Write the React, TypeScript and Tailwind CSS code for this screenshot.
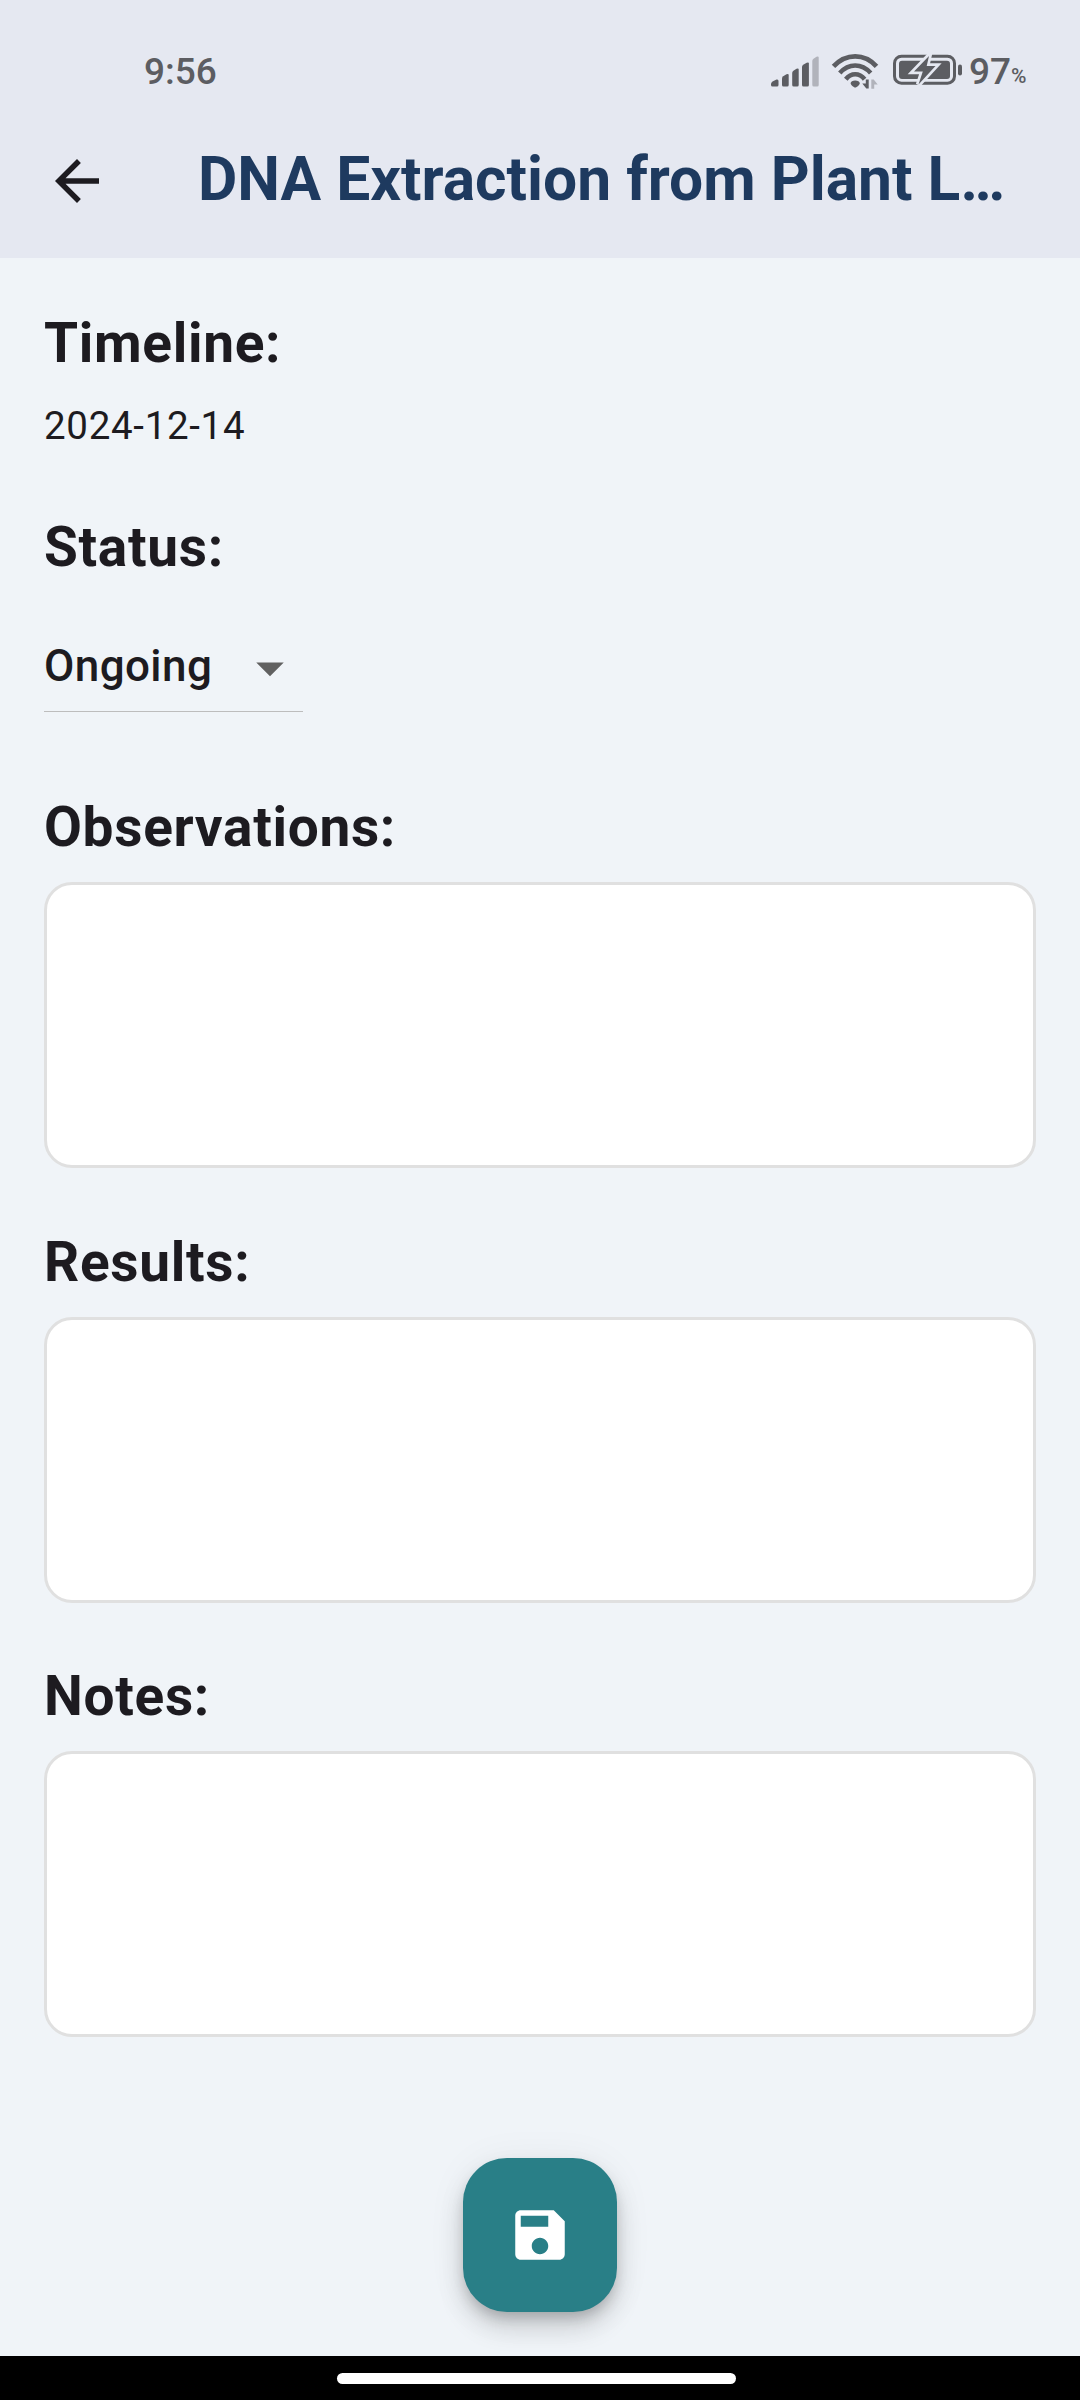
import React from "react";

const heading =
  "h-[66px] text-[55px] leading-[66px] font-bold tracking-[0.6875px] whitespace-nowrap";

function Signal() {
  return (
    <svg width="50" height="34" viewBox="0 0 50 34" className="block shrink-0" fill="#5c5d62">
      <path d="M1 29q0-1.500 1.500-2.500l4-2q2-.5 2 1.500v4q0 1.500-1.500 1.500H2.500Q1 31.500 1 30z" />
      <path d="M12 23.500q0-1.500 1.200-2.300l3.300-2q2.200-.8 2.200.7V30q0 1.500-1.500 1.500h-3.700Q12 31.500 12 30z" />
      <path d="M22.200 18q0-1.500 1.200-2.300l3.100-2q2.200-.8 2.200.7V30q0 1.500-1.500 1.500h-3.500q-1.500 0-1.500-1.500z" />
      <path d="M32 12q0-1.500 1.200-2.300l3.500-2q2.200-.8 2.200.7V30q0 1.500-1.500 1.500h-3.900Q32 31.500 32 30z" />
      <path d="M42.300 6q0-1.500 1.200-2.300l3-2q2.200-.8 2.200.7V30q0 1.500-1.500 1.500h-3.400q-1.500 0-1.500-1.500z" fill="#b1b3bb" />
    </svg>
  );
}

function Wifi() {
  return (
    <svg width="48" height="38" viewBox="0 0 48 38" className="block shrink-0" fill="none" stroke="#5c5d62" strokeLinejoin="round">
      <path d="M2.500 13.300Q12 3.300 24.200 3.300T45.500 13.300" strokeWidth="4.800" />
      <path d="M8.800 20Q15.500 12.500 24.200 12.500T39.700 20" strokeWidth="4.600" />
      <path d="M14.800 26.300q4-5 9.400-5t9.400 5" strokeWidth="4.600" />
      <path d="M24.200 27.500c2.500 0 4.600 1.300 4.600 2.700 0 1.300-3 4.300-4.600 4.300s-4.600-3-4.600-4.300c0-1.400 2.100-2.700 4.600-2.700z" fill="#5c5d62" stroke="none" />
      <path d="M37.700 26.500v9h-2.400l-4-5h3.500v-4z" fill="#5c5d62" stroke="none" />
      <path d="M40.300 35.800v-9.300h2.400l4 5h-3.500v4.300z" fill="#b1b3bb" stroke="none" />
    </svg>
  );
}

function Battery() {
  return (
    <svg width="70" height="34" viewBox="0 0 70 34" className="block shrink-0">
      <rect x="1.500" y="3.200" width="60" height="27" rx="7" fill="none" stroke="#5c5d62" strokeWidth="3" />
      <rect x="6" y="7.700" width="51" height="18.300" rx="3" fill="#5c5d62" />
      <rect x="65" y="11.500" width="4" height="11" rx="2" fill="#5c5d62" />
      <path
        d="M36 3 21 18.500h8.800L25.500 31.500 42.500 13h-8.800z"
        fill="#5c5d62"
        stroke="#e5e8f1"
        strokeWidth="5.400"
        paintOrder="stroke"
      />
    </svg>
  );
}

function NoteField({ label }: { label: string }) {
  return (
    <label className="block h-[434.5px]">
      <span className={"block " + heading}>{label}</span>
      <textarea
        aria-label={label}
        className="mt-[22px] block h-[286px] w-full resize-none rounded-[28px] border-3 border-[#e0e0e0] bg-white p-6 text-[44px] outline-none"
      />
    </label>
  );
}

export default function App() {
  return (
    <div className="flex h-[2400px] w-[1080px] flex-col overflow-hidden bg-[#f0f4f8] text-[#1d1b20] [font-family:Roboto,sans-serif]">
      <header className="h-[258px] shrink-0 bg-[#e5e8f1]">
        <div className="flex h-[104px] items-start pt-[48px] pl-[144px] text-[#5c5d62]">
          <span className="w-[626px] pt-px text-[37px] leading-[46px] font-medium">9:56</span>
          <div className="flex h-[46px] items-start pt-[5px]">
            <span className="block pt-[1.5px]"><Signal /></span>
            <span className="ml-[11px] block"><Wifi /></span>
            <span className="ml-[14px] block"><Battery /></span>
          </div>
          <span className="ml-[6px] pt-px text-[37px] leading-[46px] font-medium">97</span>
          <span className="pt-[5px] text-[21px] leading-[46px] font-medium">%</span>
        </div>
        <div className="flex h-[154px] items-start pl-[44px]">
          <button aria-label="Back" className="mt-[44px] shrink-0">
            <svg width="66" height="66" viewBox="0 0 24 24" className="block" fill="#1d1b20">
              <path d="M20 11H7.830l5.590-5.590L12 4l-8 8 8 8 1.410-1.410L7.830 13H20v-2z" />
            </svg>
          </button>
          <h1 className="mt-[39px] ml-[88px] text-[60.5px] leading-[74px] font-bold whitespace-nowrap text-[#1e3a5f]">
            DNA Extraction from Plant L…
          </h1>
        </div>
      </header>

      <main className="flex h-[2098px] shrink-0 flex-col px-[44px] pt-[52px]">
        <h2 className={heading}>Timeline:</h2>
        <p className="mt-[22px] h-[56px] text-[38.5px] leading-[56px] tracking-[0.6875px]">2024-12-14</p>
        <h2 className={"mt-[60px] " + heading}>Status:</h2>
        <button className="mt-[44px] flex h-[88px] w-[259px] shrink-0 items-center justify-between border-b border-[#bdbdbd]">
          <span className="pb-[3px] text-[44px] leading-[66px] font-medium tracking-[0.4125px]">Ongoing</span>
          <svg width="66" height="66" viewBox="0 0 24 24" className="block" fill="#616161">
            <path d="M7 10l5 5 5-5z" />
          </svg>
        </button>
        <section className="mt-[82px]">
          <NoteField label="Observations:" />
          <NoteField label="Results:" />
          <NoteField label="Notes:" />
        </section>
        <button
          aria-label="Save"
          className="mt-[60.5px] flex size-[154px] shrink-0 items-center justify-center self-center rounded-[44px] bg-[#297f87] shadow-[0_8px_14px_-3px_rgba(0,0,0,0.2),0_16px_27px_0_rgba(0,0,0,0.14),0_3px_40px_0_rgba(0,0,0,0.06)]"
        >
          <svg width="66" height="66" viewBox="0 0 24 24" className="block" fill="white">
            <path d="M17 3H5c-1.110 0-2 .9-2 2v14c0 1.100.89 2 2 2h14c1.100 0 2-.9 2-2V7l-4-4zm-5 16c-1.660 0-3-1.340-3-3s1.340-3 3-3 3 1.340 3 3-1.340 3-3 3zm3-10H5V5h10v4z" />
          </svg>
        </button>
      </main>

      <footer className="flex h-[44px] shrink-0 justify-center bg-black pt-[17px]">
        <div className="mr-[7px] h-[11px] w-[399px] rounded-full bg-white" />
      </footer>
    </div>
  );
}
